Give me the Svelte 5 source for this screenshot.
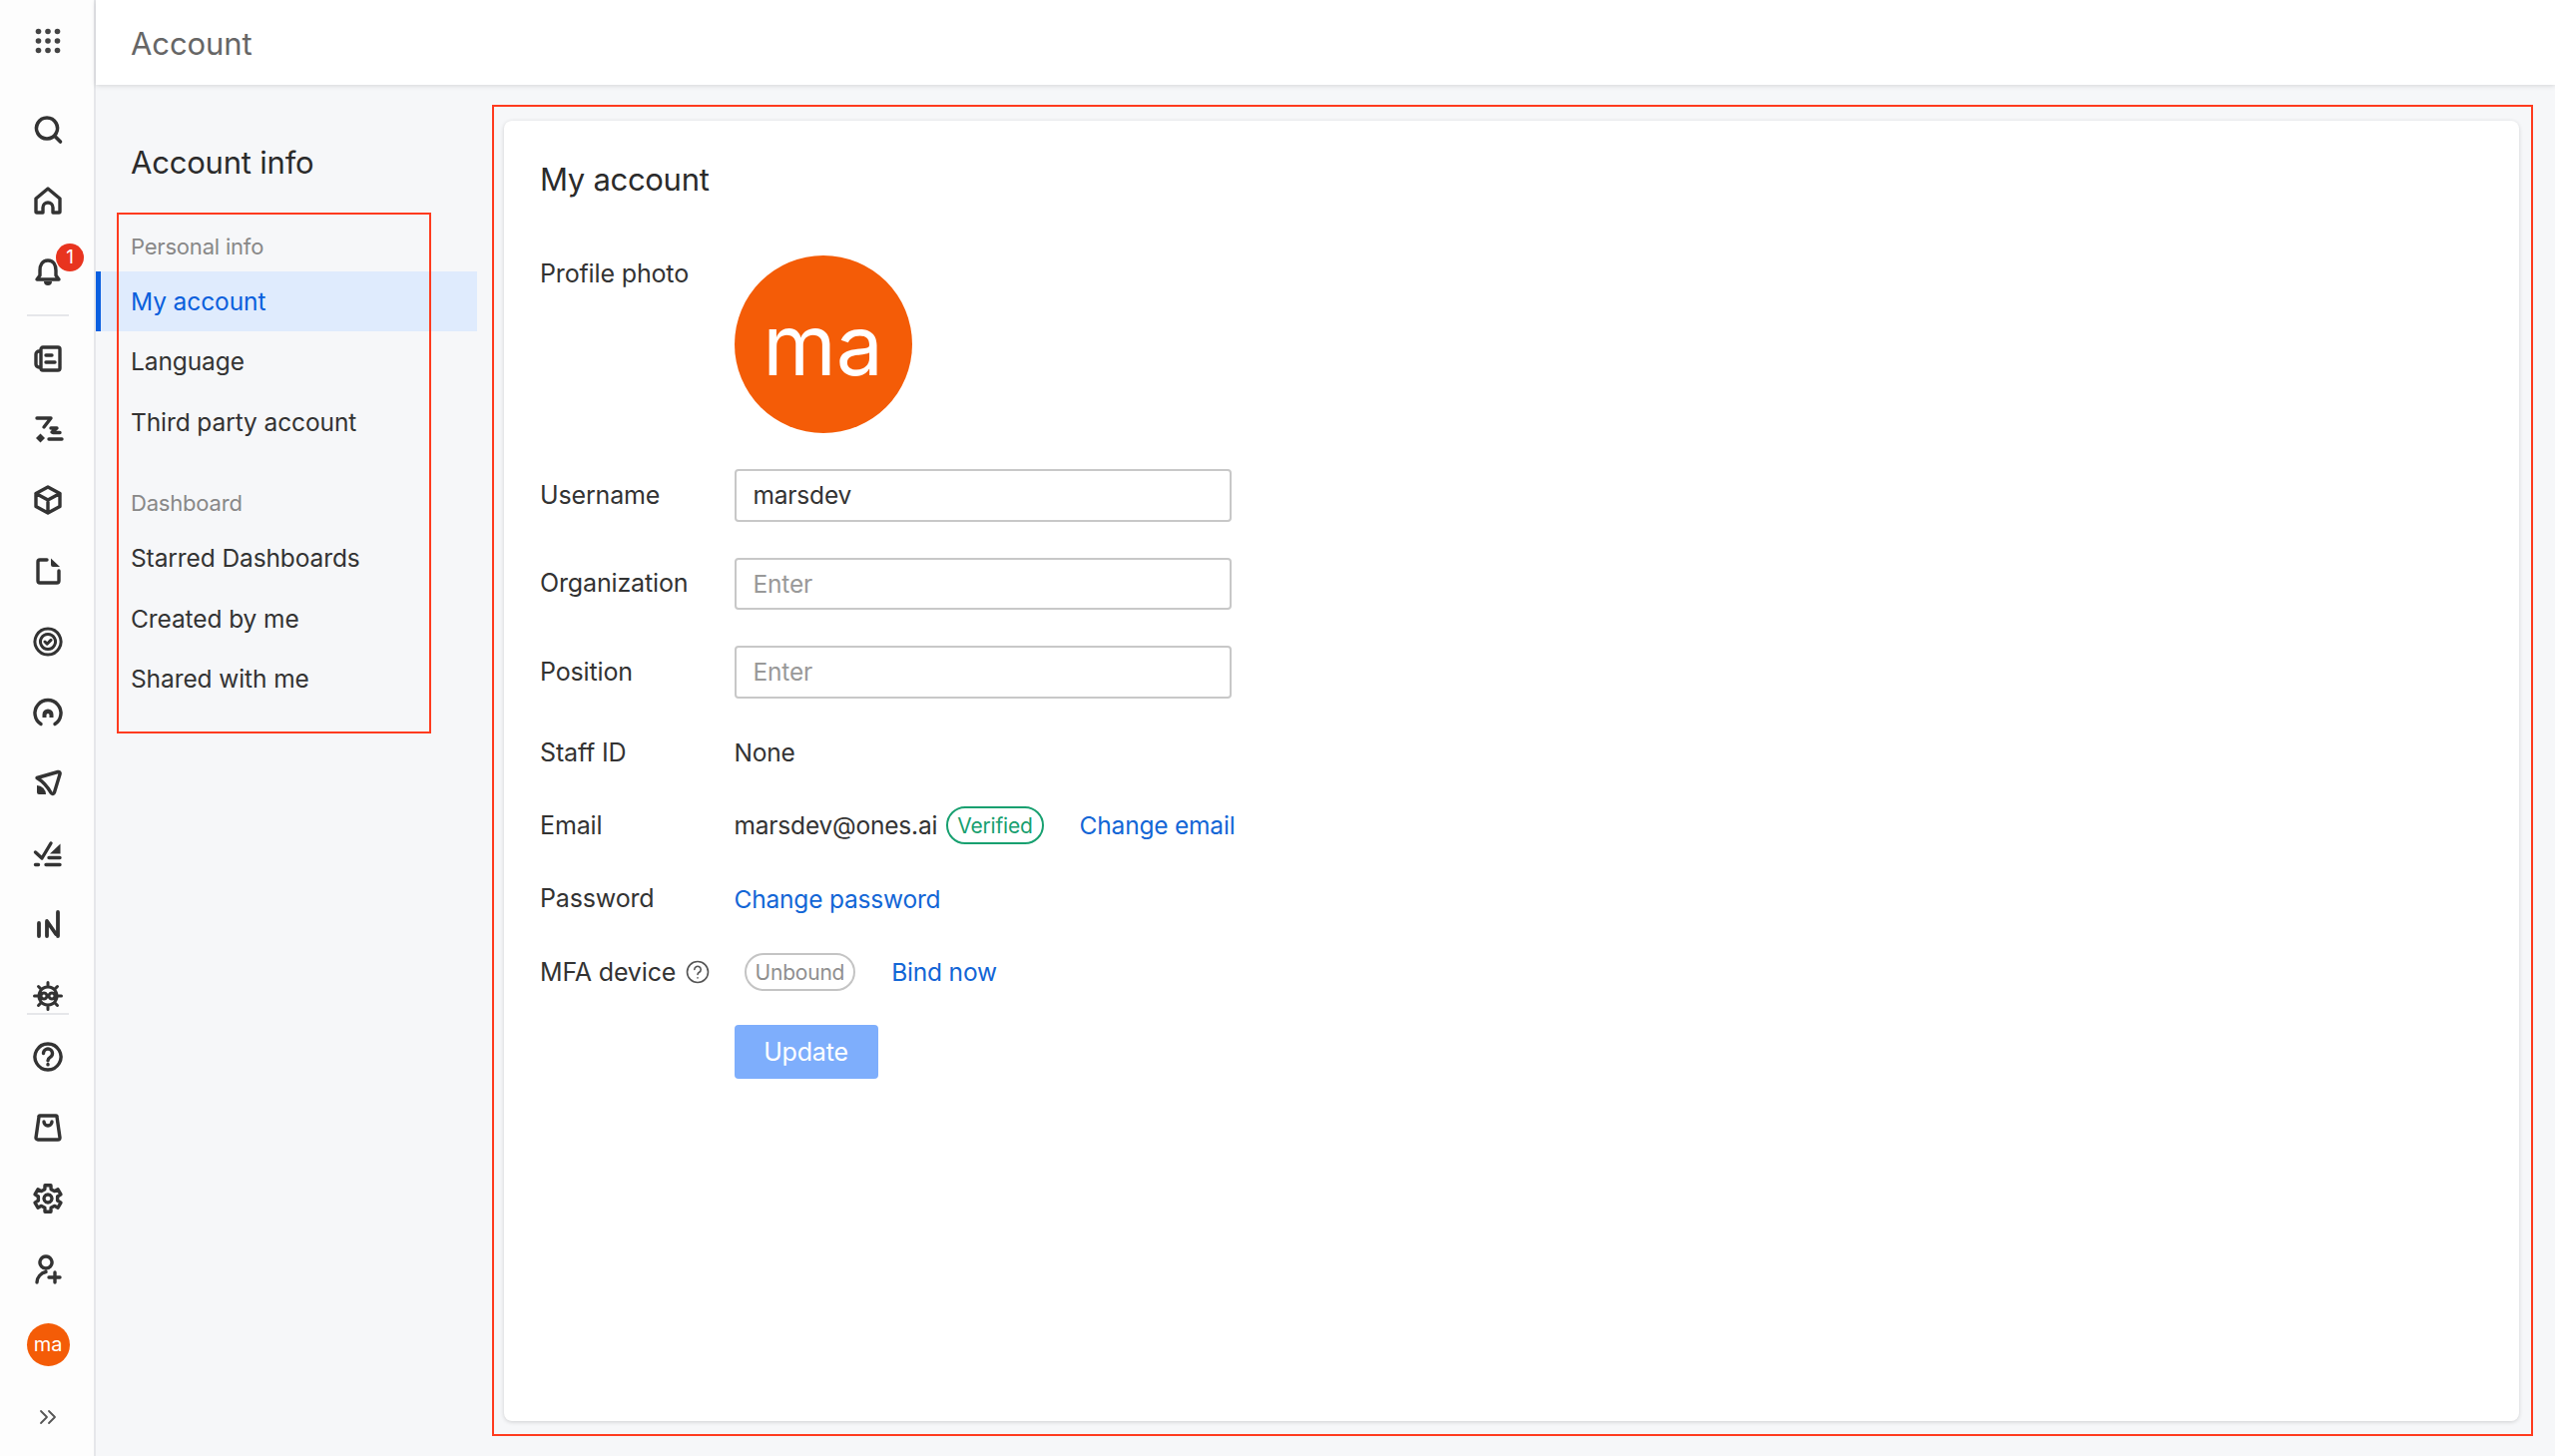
<script lang="ts">
	type Icon = { d: string; fill?: string; w?: number };

	// 32 unit box, drawn at 32px in the rail
	function gear(): string {
		let out = '';
		const teeth = 6;
		for (let i = 0; i < teeth; i++) {
			const a = (i / teeth) * Math.PI * 2 - Math.PI / 2;
			const step = Math.PI / teeth;
			const pts = [
				[a - step * 0.42, 13.6],
				[a + step * 0.42, 13.6],
				[a + step * 0.62, 9.8],
				[a + step * 1.38, 9.8]
			];
			for (const [ang, r] of pts) {
				const x = (16 + Math.cos(ang) * r).toFixed(2);
				const y = (16 + Math.sin(ang) * r).toFixed(2);
				out += (out ? 'L' : 'M') + x + ' ' + y;
			}
		}
		return out + 'Z M16 12a4 4 0 1 0 .01 0Z';
	}

	function bug(): string {
		let out = 'M16 7a9 9 0 1 0 .01 0Z M12 13a3 3 0 1 0 .01 0Z M20 13a3 3 0 1 0 .01 0Z';
		for (let i = 0; i < 8; i++) {
			const a = (i / 8) * Math.PI * 2;
			const x1 = (16 + Math.cos(a) * 9).toFixed(1);
			const y1 = (16 + Math.sin(a) * 9).toFixed(1);
			const x2 = (16 + Math.cos(a) * 13.5).toFixed(1);
			const y2 = (16 + Math.sin(a) * 13.5).toFixed(1);
			out += ` M${x1} ${y1}L${x2} ${y2}`;
		}
		return out;
	}

	const topIcons: Icon[] = [
		{ d: 'M15 4a10.5 10.5 0 1 0 .01 0Z M22.5 22l6 6', w: 3.6 },
		{ d: 'M4 14L16 4l12 10v13a1 1 0 0 1-1 1h-6v-5a5 5 0 0 0-10 0v5H5a1 1 0 0 1-1-1Z' },
		{
			d: 'M16 5c-6 0-8 5-8 10v5l-3 4h22l-3-4v-5c0-5-2-10-8-10Z',
			fill: 'M12 26h8a4 4 0 0 1-8 0Z'
		}
	];

	const listIcons: Icon[] = [
		{ d: 'M11 5h15a2 2 0 0 1 2 2v19a2 2 0 0 1-2 2H11a2 2 0 0 1-2-2V7a2 2 0 0 1 2-2Z M9 9H7a3 3 0 0 0-3 3v10a3 3 0 0 0 3 3h2 M14 13h6 M14 20h9' },
		{
			d: 'M5 5h14l-7 9 M19 15h6l-5 4 M17 26h13 M21 19.5h7',
			fill: 'M8.5 20.5l4.5 4.5-4.5 4.5-4.5-4.5Z'
		},
		{ d: 'M16 3l12 6.5v13L16 29 4 22.5v-13Z M4 9.5L16 16l12-6.5 M16 16v13' },
		{
			d: 'M15 5H8a2 2 0 0 0-2 2v19a2 2 0 0 0 2 2h17a2 2 0 0 0 2-2V16',
			fill: 'M19 3.5l9 8.5h-7a2 2 0 0 1-2-2Z'
		},
		{ d: 'M16 3a13 13 0 1 0 .01 0Z M16 8.500a7.500 7.500 0 1 0 .01 0Z M13 16l2.200 2.200 3.800-3.800', w: 3 },
		{
			d: 'M9 27.500A13 13 0 1 1 23 27.500',
			fill: 'M10.500 21v-3a5.500 5.500 0 0 1 11 0v3h-4v-2.500a1.500 1.500 0 0 0-3 0V21Z',
			w: 3.400
		},
		{
			d: 'M5 10.500L26 4.500c1.500-.4 2.500.6 2.100 2.100L22.500 25c-.5 1.700-2.500 2-3.400.5C16 20 11 14 5 10.500Z',
			fill: 'M5 18a9 9 0 0 1 9 9H7a2 2 0 0 1-2-2Z'
		},
		{
			d: 'M3.500 14l6.500 6L19 5 M17 19.500h11 M14 26.500h14 M3.500 26.500h3',
			fill: 'M28.500 5.500v10H18Z'
		},
		{ d: 'M7 14v13 M15 27V12l9 13 M26 3v24', w: 3.800 },
		{ d: bug(), w: 3 }
	];

	const bottomIcons: Icon[] = [
		{ d: 'M16 3a13 13 0 1 0 .01 0Z M11.500 12.500a4.500 4.500 0 1 1 6.800 3.900c-1.500.9-2.300 1.600-2.300 3.300 M16 23.500v.4' },
		{ d: 'M8 4h16a1 1 0 0 1 1 1l3 21a2 2 0 0 1-2 2H6a2 2 0 0 1-2-2L7 5a1 1 0 0 1 1-1Z M12 10a4 4 0 0 0 8 0' },
		{ d: gear() },
		{ d: 'M14 3a6 6 0 1 0 .01 0Z M5 29c0-5 4-9.500 9-10.500 M17 24h11 M23 19v10' }
	];
</script>

{#snippet railIcon(icon: Icon)}
	<div class="rail-item">
		<svg class="ic" viewBox="0 0 32 32" fill="none" stroke="#333" stroke-width={icon.w ?? 3.4} stroke-linecap="round" stroke-linejoin="round">
			<path d={icon.d} />
			{#if icon.fill}
				<path d={icon.fill} fill="#333" stroke="none" />
			{/if}
		</svg>
	</div>
{/snippet}

<div class="app">
	<aside class="rail">
		<div class="rail-top">
			<svg class="apps" viewBox="0 0 28 28" fill="#444">
				{#each [4.5, 14, 23.5] as y}
					{#each [4.5, 14, 23.5] as x}
						<circle cx={x} cy={y} r="2.8" />
					{/each}
				{/each}
			</svg>
		</div>
		<div class="rail-list">
			<div class="rail-bell">
				{#each topIcons as icon}
					{@render railIcon(icon)}
				{/each}
				<span class="badge">1</span>
			</div>
			<div class="rail-divider"></div>
			{#each listIcons as icon}
				{@render railIcon(icon)}
			{/each}
		</div>
		<div class="rail-bottom">
			{#each bottomIcons as icon}
				{@render railIcon(icon)}
			{/each}
			<div class="rail-avatar">ma</div>
			<svg class="collapse" viewBox="0 0 20 16" fill="none" stroke="#555" stroke-width="1.8" stroke-linecap="round" stroke-linejoin="round">
				<path d="M3 2l6 6-6 6 M11 2l6 6-6 6" />
			</svg>
		</div>
	</aside>

	<div class="page">
		<header class="topbar">Account</header>
		<div class="body">
			<nav class="sidebar">
				<h2 class="sidebar-title">Account info</h2>
				<div class="group-label">Personal info</div>
				<a class="nav-item active" href="#account">My account</a>
				<a class="nav-item" href="#language">Language</a>
				<a class="nav-item" href="#third">Third party account</a>
				<div class="group-label second">Dashboard</div>
				<a class="nav-item" href="#starred">Starred Dashboards</a>
				<a class="nav-item" href="#created">Created by me</a>
				<a class="nav-item" href="#shared">Shared with me</a>
				<div class="mark mark-nav"></div>
			</nav>

			<main class="main">
				<section class="card">
					<h1 class="card-title">My account</h1>
					<div class="form">
						<div class="row photo-row">
							<div class="label">Profile photo</div>
							<div class="avatar">ma</div>
						</div>
						<div class="row field">
							<div class="label">Username</div>
							<input class="input" value="marsdev" />
						</div>
						<div class="row field">
							<div class="label">Organization</div>
							<input class="input" placeholder="Enter" />
						</div>
						<div class="row field">
							<div class="label">Position</div>
							<input class="input" placeholder="Enter" />
						</div>
						<div class="row">
							<div class="label">Staff ID</div>
							<span>None</span>
						</div>
						<div class="row">
							<div class="label">Email</div>
							<span>marsdev@ones.ai</span>
							<span class="tag verified">Verified</span>
							<a class="link change-email" href="#email">Change email</a>
						</div>
						<div class="row">
							<div class="label">Password</div>
							<a class="link" href="#password">Change password</a>
						</div>
						<div class="row">
							<div class="label mfa">
								MFA device
								<svg class="help" viewBox="0 0 24 24" fill="none" stroke="#555" stroke-width="1.6" stroke-linecap="round">
									<circle cx="12" cy="12" r="10.5" />
									<path d="M8.8 9.5a3.2 3.2 0 1 1 4.8 2.8c-1 .6-1.6 1.1-1.6 2.2 M12 17.8v.2" />
								</svg>
							</div>
							<span class="tag unbound">Unbound</span>
							<a class="link bind" href="#bind">Bind now</a>
						</div>
						<div class="row button-row">
							<div class="label"></div>
							<button class="update">Update</button>
						</div>
					</div>
				</section>
				<div class="mark mark-main"></div>
			</main>
		</div>
	</div>
</div>

<style>
	:global(body) {
		margin: 0;
		background: #f6f7f9;
	}

	.app {
		display: flex;
		width: 2560px;
		height: 1459px;
		overflow: hidden;
		font-family: Inter, 'Liberation Sans', sans-serif;
		font-size: 24.5px;
		letter-spacing: -0.2px;
		color: #333;
	}

	.rail {
		box-sizing: border-box;
		width: 96px;
		flex: none;
		display: flex;
		flex-direction: column;
		background: #fdfdfd;
		box-shadow: inset -2px 0 0 #e6e7ea;
	}

	.rail-top {
		height: 94.5px;
		padding-top: 27px;
		box-sizing: border-box;
		display: flex;
		justify-content: center;
		flex: none;
	}

	.apps {
		width: 28px;
		height: 28px;
	}

	.rail-list {
		height: 920.5px;
		overflow: hidden;
		flex: none;
	}

	.rail-bell {
		position: relative;
	}

	.rail-item {
		height: 71px;
		display: flex;
		align-items: center;
		justify-content: center;
		flex: none;
	}

	.ic {
		width: 32px;
		height: 32px;
	}

	.badge {
		position: absolute;
		left: 56px;
		top: 149px;
		width: 28px;
		height: 28px;
		border-radius: 50%;
		background: #e8341f;
		color: #fff;
		font-size: 19px;
		line-height: 28px;
		text-align: center;
	}

	.rail-divider {
		height: 2px;
		margin: 7px 27px;
		background: #e6e7ea;
	}

	.rail-bottom {
		flex: none;
		display: flex;
		flex-direction: column;
		align-items: center;
		margin: 0 27px;
		padding-top: 6px;
		border-top: 2px solid #e6e7ea;
	}

	.rail-avatar {
		width: 43px;
		height: 43px;
		margin-top: 19px;
		flex: none;
		border-radius: 50%;
		background: #f45c07;
		color: #fff;
		font-size: 20px;
		line-height: 42px;
		text-align: center;
	}

	.collapse {
		width: 20px;
		height: 16px;
		margin-top: 43px;
		flex: none;
	}

	.page {
		flex: 1;
		min-width: 0;
		display: flex;
		flex-direction: column;
	}

	.topbar {
		height: 85px;
		flex: none;
		box-sizing: border-box;
		padding-left: 35px;
		background: #fff;
		box-shadow: 0 1px 5px rgba(0, 0, 0, 0.14);
		font-size: 31px;
		letter-spacing: -0.1px;
		line-height: 87px;
		color: #666;
		position: relative;
	}

	.body {
		flex: 1;
		display: flex;
		min-height: 0;
	}

	.sidebar {
		position: relative;
		width: 382px;
		flex: none;
		box-sizing: border-box;
		padding-top: 56px;
		display: flex;
		flex-direction: column;
	}

	.sidebar-title {
		margin: 0 0 37px;
		padding-left: 35px;
		font-size: 31px;
		font-weight: 400;
		letter-spacing: -0.2px;
		line-height: 44px;
		color: #2b2b2b;
	}

	.group-label {
		height: 50px;
		padding-left: 35px;
		font-size: 22px;
		line-height: 50px;
		color: #888;
	}

	.group-label.second {
		margin-top: 26.5px;
	}

	.nav-item {
		height: 60.3px;
		box-sizing: border-box;
		padding-left: 35px;
		line-height: 60px;
		letter-spacing: -0.1px;
		color: #333;
		text-decoration: none;
	}

	.nav-item.active {
		padding-left: 30px;
		border-left: 5px solid #0a5fe0;
		background: #dfebfd;
		color: #0a5fdc;
	}

	.mark {
		position: absolute;
		box-sizing: border-box;
		border: 2.5px solid #ff3b1f;
		pointer-events: none;
	}

	.mark-nav {
		left: 21px;
		top: 128px;
		width: 315px;
		height: 522px;
	}

	.main {
		position: relative;
		flex: 1;
		min-width: 0;
		display: flex;
		padding: 36px 36px 35px 27px;
	}

	.mark-main {
		left: 15px;
		top: 20px;
		right: 22px;
		bottom: 20px;
	}

	.card {
		flex: 1;
		box-sizing: border-box;
		padding: 37px 36px;
		background: #fff;
		border-radius: 8px;
		box-shadow: 0 1px 4px rgba(0, 0, 0, 0.16);
	}

	.card-title {
		margin: 0 0 54px;
		font-size: 31px;
		font-weight: 400;
		letter-spacing: -0.3px;
		line-height: 44px;
		color: #2b2b2b;
	}

	.form {
		display: flex;
		flex-direction: column;
		gap: 36px;
	}

	.row {
		display: flex;
		align-items: center;
		height: 37.3px;
	}

	.photo-row {
		height: 178px;
		align-items: flex-start;
	}

	.label {
		width: 194.5px;
		flex: none;
		font-size: 25px;
		letter-spacing: -0.15px;
		line-height: 37px;
	}

	.mfa {
		display: flex;
		align-items: center;
		gap: 10px;
	}

	.help {
		width: 24px;
		height: 24px;
	}

	.avatar {
		width: 178px;
		height: 178px;
		border-radius: 50%;
		background: #f45c07;
		color: #fff;
		font-size: 84px;
		letter-spacing: 0;
		line-height: 180px;
		text-align: center;
	}

	.row.field {
		height: 52.5px;
	}

	.input {
		box-sizing: border-box;
		width: 498px;
		height: 52.5px;
		padding: 0 17px;
		border: 2px solid #c8c8c8;
		border-radius: 4px;
		background: #fff;
		font: inherit;
		letter-spacing: inherit;
		color: #333;
		outline: none;
	}

	.input::placeholder {
		color: #999;
	}

	.tag {
		box-sizing: border-box;
		height: 38px;
		display: inline-flex;
		align-items: center;
		padding: 0 9px;
		border: 2px solid;
		border-radius: 19px;
		font-size: 21px;
	}

	.verified {
		margin-left: 9px;
		color: #18a070;
		border-color: #18a070;
	}

	.unbound {
		margin-left: 10px;
		color: #8f8f8f;
		border-color: #c4c4c4;
	}

	.link {
		color: #1366d6;
		text-decoration: none;
	}

	.change-email {
		margin-left: 36px;
	}

	.bind {
		margin-left: 36px;
	}

	.update {
		box-sizing: border-box;
		width: 144px;
		height: 54px;
		border: 0;
		border-radius: 4px;
		background: #7eaefc;
		color: #fff;
		font: inherit;
		font-size: 25px;
		letter-spacing: inherit;
	}

	.row.button-row {
		height: 54px;
		margin-top: -2px;
	}
</style>
